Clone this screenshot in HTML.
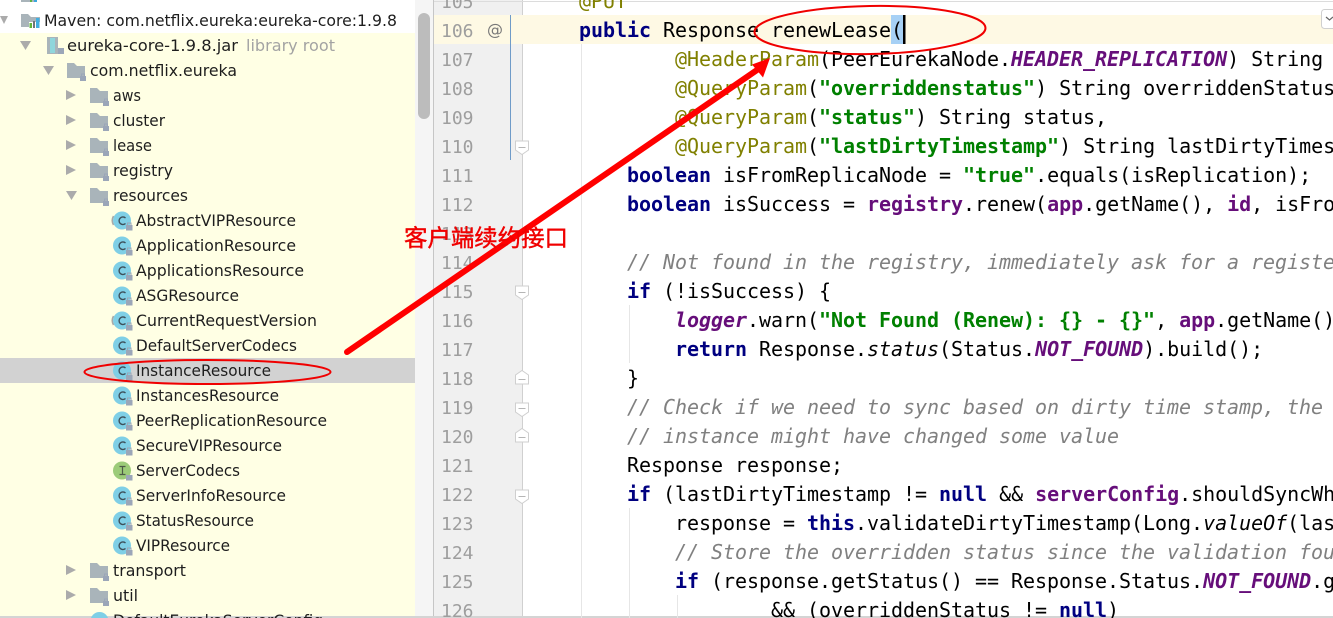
<!DOCTYPE html>
<html lang="en"><head><meta charset="utf-8"><title>IDE</title>
<style>
html,body{margin:0;padding:0;background:#fff;width:1333px;height:618px;overflow:hidden}
svg{display:block}
.t{font-family:"DejaVu Sans","Liberation Sans",sans-serif;font-size:16px;fill:#1e1e1e}
.n{font-family:"DejaVu Sans Mono","Liberation Mono",monospace;font-size:18px;fill:#9e9e9e}
.c{font-family:"DejaVu Sans Mono","Liberation Mono",monospace;font-size:20px;fill:#000;white-space:pre;letter-spacing:-0.04px}
.k{fill:#000080;font-weight:bold}
.a{fill:#808000}
.s{fill:#008000;font-weight:bold}
.f{fill:#660e7a;font-weight:bold}
.fi{fill:#660e7a;font-weight:bold;font-style:italic}
.i{font-style:italic}
.m{fill:#808080;font-style:italic}
</style></head><body>
<svg width="1333" height="618" viewBox="0 0 1333 618" xmlns="http://www.w3.org/2000/svg">
<defs>
<g id="fo"><path d="M90 88h7l3 3h8v12H90z" fill="#a9b4ba"/><path d="M103 101h6v5h-6z" fill="#9ba6b8"/><path d="M104.500 101v-2h3v2" fill="none" stroke="#9ba6b8"/></g>
<g id="ci"><circle cx="122" cy="220.500" r="9" fill="#7fcfe6"/><path d="M126 225h6.500v5.500H126z" fill="#9ba6b8"/><path d="M127.500 225v-2h3.500v2" fill="none" stroke="#9ba6b8"/><path d="M125.500 218a3.800 3.800 0 1 0 0 5.500" fill="none" stroke="#3d4f5a" stroke-width="1.400"/></g>
<g id="tr"><path d="M66 90l10 5-10 5z" fill="#ababab"/></g>
<path id="fd" d="M515.500 141h13v9l-6.500 4.500-6.500-4.500z" fill="#fff" stroke="#cfcfcf"/>
<path id="fu" d="M515.500 384h13v-9l-6.500-4.500-6.500 4.500z" fill="#fff" stroke="#cfcfcf"/>
</defs>

<!-- backgrounds -->
<rect x="0" y="0" width="415" height="618" fill="#ffffe4"/>
<rect x="0" y="0" width="415" height="33" fill="#fff"/>
<rect x="0" y="358" width="415" height="25" fill="#d2d2d2"/>
<rect x="415" y="0" width="18" height="618" fill="#f5f5f5"/>
<rect x="433" y="0" width="1" height="618" fill="#c6c6c6"/>
<rect x="434" y="0" width="88" height="618" fill="#f0f0f0"/>
<rect x="522" y="0" width="1" height="618" fill="#d0d0d0"/>
<rect x="434" y="15" width="899" height="29" fill="#fef9e4"/>
<rect x="418" y="13" width="12" height="106" rx="6" fill="#bcbcbc"/>
<rect x="434" y="1" width="899" height="1" fill="#dcdcdc"/>
<rect x="0" y="616" width="1333" height="2" fill="#d4d4d4"/>
<rect x="510" y="15" width="1" height="145" fill="#6f9bc8"/>
<rect x="581" y="44" width="1" height="574" fill="#e6e6e6"/>
<rect x="629" y="305" width="1" height="58" fill="#e6e6e6"/>
<rect x="629" y="508" width="1" height="110" fill="#e6e6e6"/>
<rect x="677" y="595" width="1" height="23" fill="#e6e6e6"/>
<rect x="891" y="15" width="12" height="29" fill="#a6d0f5"/>
<rect x="1321.500" y="9.500" width="16" height="19" rx="3" fill="#fff" stroke="#d0d0d0"/>
<path d="M1326 17l3.500 3 3.500-3" fill="none" stroke="#666" stroke-width="1.200"/>

<!-- tree arrows -->
<path d="M0 16h8l-4 8z" fill="#ababab"/>
<path d="M20 41h11l-5.500 9z" fill="#ababab"/>
<path d="M43 66h11l-5.500 9z" fill="#ababab"/>
<use href="#tr"/><use href="#tr" y="25"/><use href="#tr" y="50"/><use href="#tr" y="75"/>
<path d="M66 191h11l-5.500 9z" fill="#ababab"/>
<use href="#tr" y="475"/><use href="#tr" y="500"/>

<!-- tree icons -->
<path d="M21-8h16v10H21z" fill="#a9b4ba"/><rect x="30" y="-3" width="2" height="5" fill="#61b33f"/><rect x="34" y="-3" width="3" height="5" fill="#3ba7dd"/>
<path d="M21 14h7l3 3h9v10H21z" fill="#a9b4ba"/>
<rect x="29" y="22" width="11" height="7" fill="#fff"/>
<rect x="29.500" y="23" width="2.500" height="5" fill="#5fb53b"/>
<rect x="33" y="21" width="2" height="7" fill="#6f7478"/><rect x="36" y="18" width="3.500" height="10" fill="#40aee0"/>
<rect x="47" y="37" width="11" height="17" fill="#a9b4ba"/><rect x="50" y="38" width="5" height="15" fill="#8fd6dc"/><path d="M58 48h6v6h-6z" fill="#9ba6b8"/>
<use href="#fo" x="-23" y="-25"/>
<use href="#fo"/><use href="#fo" y="25"/><use href="#fo" y="50"/><use href="#fo" y="75"/><use href="#fo" y="100"/>
<use href="#ci"/><use href="#ci" y="25"/><use href="#ci" y="50"/><use href="#ci" y="75"/><use href="#ci" y="100"/><use href="#ci" y="125"/>
<path d="M113.500 216a9 9 0 0 0 0 9M113.500 316a9 9 0 0 0 0 9" fill="none" stroke="#a8a8a8" stroke-width="1.500"/>
<use href="#ci" y="150"/><use href="#ci" y="175"/><use href="#ci" y="200"/><use href="#ci" y="225"/>
<circle cx="122" cy="470.500" r="9" fill="#9ccb79"/><path d="M126 475h6.500v5.500H126z" fill="#9ba6b8"/><path d="M119.500 466.500h6M122.500 466.500v8M119.500 474.500h6" stroke="#4d5b47" stroke-width="1.200" fill="none"/>
<use href="#ci" y="275"/><use href="#ci" y="300"/><use href="#ci" y="325"/>
<use href="#fo" y="475"/><use href="#fo" y="500"/>
<circle cx="99.500" cy="621" r="9" fill="#7fcfe6"/>

<!-- tree text -->
<text class="t" x="44" y="-1" textLength="370" lengthAdjust="spacingAndGlyphs">Maven: com.netflix.eureka:eureka-client:1.9.8</text>
<text class="t" x="44" y="26" textLength="353" lengthAdjust="spacingAndGlyphs">Maven: com.netflix.eureka:eureka-core:1.9.8</text>
<text class="t" x="67" y="51" textLength="171" lengthAdjust="spacingAndGlyphs">eureka-core-1.9.8.jar</text>
<text class="t" x="246" y="51" textLength="89" lengthAdjust="spacingAndGlyphs" style="fill:#a3a3a3">library root</text>
<text class="t" x="90" y="76" textLength="147" lengthAdjust="spacingAndGlyphs">com.netflix.eureka</text>
<text class="t" x="113" y="101" textLength="28" lengthAdjust="spacingAndGlyphs">aws</text>
<text class="t" x="113" y="126" textLength="52" lengthAdjust="spacingAndGlyphs">cluster</text>
<text class="t" x="113" y="151" textLength="39" lengthAdjust="spacingAndGlyphs">lease</text>
<text class="t" x="113" y="176" textLength="60" lengthAdjust="spacingAndGlyphs">registry</text>
<text class="t" x="113" y="201" textLength="75" lengthAdjust="spacingAndGlyphs">resources</text>
<text class="t" x="136" y="226" textLength="160" lengthAdjust="spacingAndGlyphs">AbstractVIPResource</text>
<text class="t" x="136" y="251" textLength="160" lengthAdjust="spacingAndGlyphs">ApplicationResource</text>
<text class="t" x="136" y="276" textLength="168" lengthAdjust="spacingAndGlyphs">ApplicationsResource</text>
<text class="t" x="136" y="301" textLength="103" lengthAdjust="spacingAndGlyphs">ASGResource</text>
<text class="t" x="136" y="326" textLength="181" lengthAdjust="spacingAndGlyphs">CurrentRequestVersion</text>
<text class="t" x="136" y="351" textLength="161" lengthAdjust="spacingAndGlyphs">DefaultServerCodecs</text>
<text class="t" x="136" y="376" textLength="135" lengthAdjust="spacingAndGlyphs">InstanceResource</text>
<text class="t" x="136" y="401" textLength="143" lengthAdjust="spacingAndGlyphs">InstancesResource</text>
<text class="t" x="136" y="426" textLength="191" lengthAdjust="spacingAndGlyphs">PeerReplicationResource</text>
<text class="t" x="136" y="451" textLength="146" lengthAdjust="spacingAndGlyphs">SecureVIPResource</text>
<text class="t" x="136" y="476" textLength="104" lengthAdjust="spacingAndGlyphs">ServerCodecs</text>
<text class="t" x="136" y="501" textLength="150" lengthAdjust="spacingAndGlyphs">ServerInfoResource</text>
<text class="t" x="136" y="526" textLength="118" lengthAdjust="spacingAndGlyphs">StatusResource</text>
<text class="t" x="136" y="551" textLength="94" lengthAdjust="spacingAndGlyphs">VIPResource</text>
<text class="t" x="113" y="576" textLength="73" lengthAdjust="spacingAndGlyphs">transport</text>
<text class="t" x="113" y="601" textLength="25" lengthAdjust="spacingAndGlyphs">util</text>
<text class="t" x="113" y="626" textLength="210" lengthAdjust="spacingAndGlyphs">DefaultEurekaServerConfig</text>

<!-- line numbers -->
<text class="n" x="441" y="8">105</text><text class="n" x="441" y="37">106</text><text class="n" x="441" y="66">107</text>
<text class="n" x="441" y="95">108</text><text class="n" x="441" y="124">109</text><text class="n" x="441" y="153">110</text>
<text class="n" x="441" y="182">111</text><text class="n" x="441" y="211">112</text><text class="n" x="441" y="240">113</text>
<text class="n" x="441" y="269">114</text><text class="n" x="441" y="298">115</text><text class="n" x="441" y="327">116</text>
<text class="n" x="441" y="356">117</text><text class="n" x="441" y="385">118</text><text class="n" x="441" y="414">119</text>
<text class="n" x="441" y="443">120</text><text class="n" x="441" y="472">121</text><text class="n" x="441" y="501">122</text>
<text class="n" x="441" y="530">123</text><text class="n" x="441" y="559">124</text><text class="n" x="441" y="588">125</text>
<text class="n" x="441" y="617">126</text>
<text x="487" y="35" style="font-family:'DejaVu Sans',sans-serif;fill:#787878;font-size:16px">@</text>

<!-- fold marks -->
<use href="#fd"/><use href="#fd" y="145"/><use href="#fu"/><use href="#fd" y="262"/><use href="#fu" y="58"/><use href="#fd" y="349"/>
<path d="M518.500 147.500h7M518.500 292.500h7M518.500 379.500h7M518.500 408.500h7M518.500 437.500h7M518.500 496.500h7" stroke="#b5b5b5"/>

<!-- code -->
<text class="c" x="579" y="8"><tspan class="a">@PUT</tspan></text>
<text class="c" x="579" y="37"><tspan class="k">public</tspan> Response renewLease(</text>
<text class="c" x="675" y="66"><tspan class="a">@HeaderParam</tspan>(PeerEurekaNode.<tspan class="fi">HEADER_REPLICATION</tspan>) String isReplication,</text>
<text class="c" x="675" y="95"><tspan class="a">@QueryParam</tspan>(<tspan class="s">"overriddenstatus"</tspan>) String overriddenStatus,</text>
<text class="c" x="675" y="124"><tspan class="a">@QueryParam</tspan>(<tspan class="s">"status"</tspan>) String status,</text>
<text class="c" x="675" y="153"><tspan class="a">@QueryParam</tspan>(<tspan class="s">"lastDirtyTimestamp"</tspan>) String lastDirtyTimestamp) {</text>
<text class="c" x="627" y="182"><tspan class="k">boolean</tspan> isFromReplicaNode = <tspan class="s">"true"</tspan>.equals(isReplication);</text>
<text class="c" x="627" y="211"><tspan class="k">boolean</tspan> isSuccess = <tspan class="f">registry</tspan>.renew(<tspan class="f">app</tspan>.getName(), <tspan class="f">id</tspan>, isFromReplicaNode);</text>
<text class="c" x="627" y="269"><tspan class="m">// Not found in the registry, immediately ask for a register</tspan></text>
<text class="c" x="627" y="298"><tspan class="k">if</tspan> (!isSuccess) {</text>
<text class="c" x="675" y="327"><tspan class="fi">logger</tspan>.warn(<tspan class="s">"Not Found (Renew): {} - {}"</tspan>, <tspan class="f">app</tspan>.getName(), <tspan class="f">id</tspan>);</text>
<text class="c" x="675" y="356"><tspan class="k">return</tspan> Response.<tspan class="i">status</tspan>(Status.<tspan class="fi">NOT_FOUND</tspan>).build();</text>
<text class="c" x="627" y="385">}</text>
<text class="c" x="627" y="414"><tspan class="m">// Check if we need to sync based on dirty time stamp, the client</tspan></text>
<text class="c" x="627" y="443"><tspan class="m">// instance might have changed some value</tspan></text>
<text class="c" x="627" y="472">Response response;</text>
<text class="c" x="627" y="501"><tspan class="k">if</tspan> (lastDirtyTimestamp != <tspan class="k">null</tspan> &amp;&amp; <tspan class="f">serverConfig</tspan>.shouldSyncWhenTimestampDiffers()) {</text>
<text class="c" x="675" y="530">response = <tspan class="k">this</tspan>.validateDirtyTimestamp(Long.<tspan class="i">valueOf</tspan>(lastDirtyTimestamp), isFromReplicaNode);</text>
<text class="c" x="675" y="559"><tspan class="m">// Store the overridden status since the validation found out</tspan></text>
<text class="c" x="675" y="588"><tspan class="k">if</tspan> (response.getStatus() == Response.Status.<tspan class="fi">NOT_FOUND</tspan>.getStatusCode()</text>
<text class="c" x="771" y="617">&amp;&amp; (overriddenStatus != <tspan class="k">null</tspan>)</text>
<rect x="903" y="15" width="2.500" height="29" fill="#000"/>

<!-- annotations -->
<ellipse cx="870" cy="30" rx="115.500" ry="24" fill="none" stroke="#f00000" stroke-width="2" transform="rotate(-1 870 30)"/>
<ellipse cx="207.500" cy="372" rx="123" ry="12" fill="none" stroke="#f00000" stroke-width="2"/>
<path d="M347 352L757 70" stroke="#ff0000" stroke-width="6" stroke-linecap="round" fill="none"/>
<path d="M770 58L752 64.500L763 77.500z" fill="#ff0000"/>
<text x="404" y="246" textLength="164" style="font-family:'Liberation Sans','Noto Sans CJK SC',sans-serif;font-size:23.500px;fill:#f00000;stroke:#f00000;stroke-width:0.4px">客户端续约接口</text>
</svg>
</body></html>
